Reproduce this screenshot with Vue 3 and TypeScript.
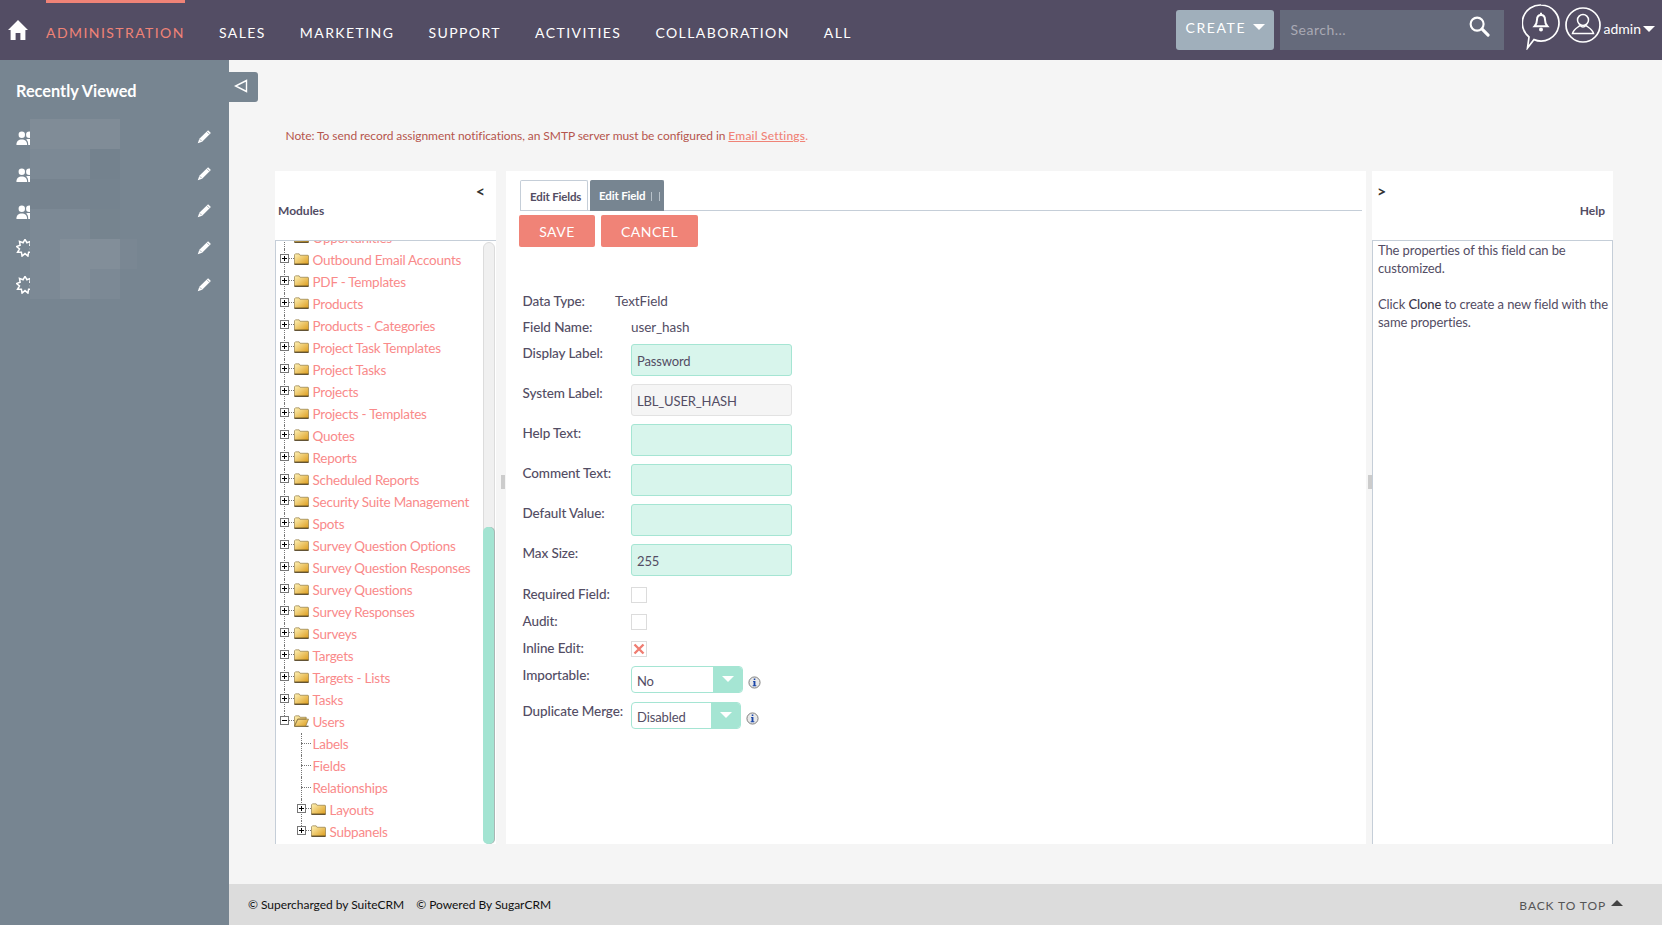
<script setup lang="ts">
type Row = { label: string; kind: 'plus' | 'minus' | 'leaf'; depth: number; last?: boolean }
const nav: string[] = ['SALES', 'MARKETING', 'SUPPORT', 'ACTIVITIES', 'COLLABORATION', 'ALL']
const recent: string[] = ['people', 'people', 'people', 'burst', 'burst']
const burst: string = Array.from({ length: 18 }, (_, i) => {
  const r = i % 2 === 0 ? 8.6 : 5.6
  const a = (i / 18) * Math.PI * 2 - Math.PI / 2
  return `${(9 + r * Math.cos(a)).toFixed(2)},${(9 + r * Math.sin(a)).toFixed(2)}`
}).join(' ')
const mosaic: { c: string[] }[] = [
  { c: ['#808c97', '#808c97', '#808c97', 'none'] },
  { c: ['#7c8995', '#7c8995', '#74828e', 'none'] },
  { c: ['#76838f', '#76838f', '#75838f', 'none'] },
  { c: ['#7c8995', '#7c8995', '#76848f', 'none'] },
  { c: ['#7c8995', '#828e99', '#828e99', '#7a8793'] },
  { c: ['#7c8995', '#828e99', '#7c8995', 'none'] }
]
const names: string[] = ['Opportunities', 'Outbound Email Accounts', 'PDF - Templates', 'Products', 'Products - Categories', 'Project Task Templates', 'Project Tasks', 'Projects', 'Projects - Templates', 'Quotes', 'Reports', 'Scheduled Reports', 'Security Suite Management', 'Spots', 'Survey Question Options', 'Survey Question Responses', 'Survey Questions', 'Survey Responses', 'Surveys', 'Targets', 'Targets - Lists', 'Tasks']
const rows: Row[] = [
  ...names.map((label): Row => ({ label, kind: 'plus', depth: 0 })),
  { label: 'Users', kind: 'minus', depth: 0, last: true },
  { label: 'Labels', kind: 'leaf', depth: 1 },
  { label: 'Fields', kind: 'leaf', depth: 1 },
  { label: 'Relationships', kind: 'leaf', depth: 1 },
  { label: 'Layouts', kind: 'plus', depth: 1 },
  { label: 'Subpanels', kind: 'plus', depth: 1, last: true }
]
const inputs: { label: string; value: string; locked?: boolean }[] = [
  { label: 'Display Label:', value: 'Password' },
  { label: 'System Label:', value: 'LBL_USER_HASH', locked: true },
  { label: 'Help Text:', value: '' },
  { label: 'Comment Text:', value: '' },
  { label: 'Default Value:', value: '' },
  { label: 'Max Size:', value: '255' }
]
const checks: { label: string; on: boolean }[] = [
  { label: 'Required Field:', on: false },
  { label: 'Audit:', on: false },
  { label: 'Inline Edit:', on: true }
]
</script>

<template>
  <div class="page">
    <header class="top">
      <svg class="home" viewBox="0 0 20 20"><path d="M10 0 20 10h-2.600v10h-5v-7H7.600v7h-5V10H0z" fill="#fff" /></svg>
      <nav class="nav">
        <a class="nav-item active">ADMINISTRATION</a>
        <a v-for="n in nav" :key="n" class="nav-item">{{ n }}</a>
      </nav>
      <div class="create">CREATE<i class="caret"></i></div>
      <div class="search">
        <span>Search...</span>
        <svg viewBox="0 0 22 22" class="lens"><circle cx="8.500" cy="8.500" r="6.800" fill="none" stroke="#fff" stroke-width="2.200" /><path d="M13.800 13.800 20 20" stroke="#fff" stroke-width="3.200" stroke-linecap="round" /></svg>
      </div>
      <svg class="bell" viewBox="0 0 38 46">
        <path d="M19 1a18 18 0 1 1-7 34.600L5.500 44l1.500-11A18 18 0 0 1 19 1z" fill="none" stroke="#fff" stroke-width="1.700" />
        <path d="M19 11c-2.800 0-4 2.200-4 4.800 0 3-.8 4.600-2.400 6.400h12.800c-1.600-1.800-2.400-3.400-2.400-6.400 0-2.600-1.200-4.800-4-4.800z" fill="none" stroke="#fff" stroke-width="2" /><circle cx="19" cy="25.500" r="2" fill="#fff" /><path d="M19 8.800v2" stroke="#fff" stroke-width="2" />
      </svg>
      <svg class="user" viewBox="0 0 36 36">
        <circle cx="18" cy="18" r="17" fill="none" stroke="#fff" stroke-width="1.700" />
        <circle cx="18" cy="13" r="5.500" fill="none" stroke="#fff" stroke-width="1.500" />
        <path d="M7.500 26.500c.8-4 5.200-6 7.500-8 2 2 4 2 6 0 2.300 2 6.700 4 7.500 8z" fill="none" stroke="#fff" stroke-width="1.500" />
      </svg>
      <span class="admin">admin</span><i class="caret admin-caret"></i>
    </header>

    <div class="body">
      <aside class="side">
        <h2 class="side-title">Recently Viewed</h2>
        <ul class="recent">
          <li v-for="(r, i) in recent" :key="i">
            <svg v-if="r === 'people'" class="r-icon p-icon" viewBox="0 0 16 14"><circle cx="5" cy="3.500" r="3" fill="#fff" /><circle cx="12" cy="3.500" r="3" fill="#fff" /><path d="M0 13c0-3.500 2-5 5-5s5 1.500 5 5zM11 13c0-2.500-.5-4-2-5 1-.5 2-.5 3-.5 3 0 4 2 4 5.500z" fill="#fff" /></svg>
            <svg v-else class="r-icon b-icon" viewBox="0 0 18 18"><polygon :points="burst" fill="none" stroke="#fff" stroke-width="1.500" /></svg>
            <svg class="pencil" viewBox="0 0 16 16"><path d="M.8 15.200 2.500 10.500 11.800 1.200 14.800 4.200 5.500 13.500z" fill="#fff" /><path d="m10.500 2.800 2.700 2.700M3 11l2 2" stroke="#778591" stroke-width=".7" fill="none" /></svg>
          </li>
        </ul>
        <div class="mosaic">
          <div v-for="(m, i) in mosaic" :key="i" class="m-row">
            <span v-for="(c, j) in m.c" :key="j" :class="['m-cell', { 'm-end': j === 3 }]" :style="{ background: c }"></span>
          </div>
        </div>
        <div class="toggle"><svg viewBox="0 0 14 14"><path d="M12.500 1.500v11L1.500 7z" fill="none" stroke="#fff" stroke-width="1.400" /></svg></div>
      </aside>

      <main class="main">
        <div class="content">
          <p class="note">Note: To send record assignment notifications, an SMTP server must be configured in <a>Email Settings</a><span class="dot">.</span></p>
          <div class="panels">
            <section class="panel left">
              <div class="p-head">
                <span class="chev chev-l">&lt;</span>
                <span class="p-title">Modules</span>
              </div>
              <div class="tree">
                <ul class="tree-list">
                  <li v-for="r in rows" :key="r.label" :class="['t-row', 'd' + r.depth, { last: r.last }]">
                    <template v-if="r.kind !== 'leaf'">
                      <span class="box"><i class="h"></i><i v-if="r.kind === 'plus'" class="v"></i></span>
                      <span class="dots"></span>
                      <svg class="folder" viewBox="0 0 16 12">
                        <defs><linearGradient id="fg" x1="0" y1="0" x2="1" y2="1"><stop offset="0" stop-color="#fff3b8" /><stop offset="1" stop-color="#dc9c1c" /></linearGradient></defs>
                        <path v-if="r.kind === 'plus'" d="M.5 11.500V1.500L1.500.5h4l1 1.500h8.500l.5.500v9z" fill="url(#fg)" stroke="#8a7440" stroke-width=".7" />
                        <path d="M.5 11.600H15.500" stroke="#3a2c10" stroke-width="1" />
                        <path v-if="r.kind === 'minus'" d="M.5 11.500V1.500L1.500.5h4l1 1.500h6.500v2H4L.5 11.500zm0 0L4 4h11.500l-3 7.500z" fill="url(#fg)" stroke="#8a7440" stroke-width=".7" />
                      </svg>
                    </template>
                    <span v-else class="tick"></span>
                    <a class="t-label">{{ r.label }}</a>
                  </li>
                </ul>
                <div class="track"></div>
                <div class="thumb"></div>
              </div>
            </section>
            <div class="split s-a"><i></i></div>
            <section class="panel center">
              <div class="tabs">
                <span class="tab">Edit Fields</span>
                <span class="tab on">Edit Field<em></em><em class="e2"></em></span>
              </div>
              <div class="actions">
                <button class="btn save">SAVE</button>
                <button class="btn cancel">CANCEL</button>
              </div>
              <form class="form">
                <div class="f-text t1"><label class="short">Data Type:</label><span>TextField</span></div>
                <div class="f-text t2"><label>Field Name:</label><span>user_hash</span></div>
                <div v-for="f in inputs" :key="f.label" class="f-input">
                  <label>{{ f.label }}</label>
                  <input :class="{ locked: f.locked }" :value="f.value" readonly />
                </div>
                <div v-for="c in checks" :key="c.label" class="f-check">
                  <label>{{ c.label }}</label>
                  <span class="check"><svg v-if="c.on" viewBox="0 0 12 12"><path d="m1.500 1.500 9 9m0-9-9 9" stroke="#ef7d72" stroke-width="2.400" /></svg></span>
                </div>
                <div class="f-select s1">
                  <label>Importable:</label>
                  <div class="select w1"><span>No</span><b><i></i></b></div>
                  <svg class="info" viewBox="0 0 14 14"><circle cx="7" cy="7" r="6" fill="#e8e8e8" stroke="#777" /><path d="M5.500 5.500H8V10h1v1H5v-1h1V6.500h-.5zM6.200 2.800h1.700v1.600H6.200z" fill="#1b46a8" /></svg>
                </div>
                <div class="f-select s2">
                  <label>Duplicate Merge:</label>
                  <div class="select w2"><span>Disabled</span><b><i></i></b></div>
                  <svg class="info" viewBox="0 0 14 14"><circle cx="7" cy="7" r="6" fill="#e8e8e8" stroke="#777" /><path d="M5.500 5.500H8V10h1v1H5v-1h1V6.500h-.5zM6.200 2.800h1.700v1.600H6.200z" fill="#1b46a8" /></svg>
                </div>
              </form>
            </section>
            <div class="split s-b"><i></i></div>
            <section class="panel right">
              <div class="p-head">
                <span class="chev chev-r">&gt;</span>
                <span class="p-title p-help">Help</span>
              </div>
              <div class="help">
                <p>The properties of this field can be customized.</p>
                <p>Click <b>Clone</b> to create a new field with the same properties.</p>
              </div>
            </section>
          </div>
        </div>
        <footer class="foot">
          <span>© Supercharged by SuiteCRM</span>
          <span class="f2">© Powered By SugarCRM</span>
          <span class="btt">BACK TO TOP<i></i></span>
        </footer>
      </main>
    </div>
  </div>
</template>

<style>
html, body { margin: 0; background: #f5f5f5; overflow: hidden; }
</style>

<style scoped>
* { box-sizing: border-box; }
.page { width: 1662px; height: 925px; display: flex; flex-direction: column; font-family: Lato, "Open Sans", sans-serif; color: #534d64; }
.top { height: 60px; background: #534d64; display: flex; align-items: center; padding: 0 7px 0 8px; flex: none; }
.home { width: 20px; height: 20px; margin-top: -1px; }
.nav { display: flex; gap: 34px; margin-left: 18px; height: 60px; flex: 1; }
.nav-item { color: #fff; font-size: 14px; letter-spacing: 1.430px; line-height: 60px; margin-top: 3px; }
.nav-item.active { color: #f08377; position: relative; }
.nav-item.active::before { content: ""; position: absolute; left: 0; right: 0; top: -3px; height: 3px; background: #f08377; }
.create { width: 98px; height: 40px; background: #a0afbb; border-radius: 3px; color: #fff; font-size: 14px; letter-spacing: 1.600px; display: flex; align-items: center; padding: 0 0 5px 10px; }
.caret { display: inline-block; border: 6px solid transparent; border-top-color: #fff; border-bottom-width: 0; }
.create .caret { margin: -2px 0 0 7px; }
.search { width: 224px; height: 40px; margin: 0 0 0 6px; background: #656a7b; color: #a9a9b4; font-size: 14px; padding: 0 10px 1px 11px; display: flex; align-items: center; justify-content: space-between; letter-spacing: .5px; }
.lens { width: 21px; height: 21px; margin: 6px 4px 0 0; align-self: flex-start; }
.bell { width: 38px; height: 46px; margin: -6px 0 0 18px; }
.user { width: 36px; height: 36px; margin: -11px 0 0 5px; }
.admin { color: #fff; font-size: 14px; margin: -3px 0 0 3px; }
.admin-caret { border-width: 6px 6.500px 0; margin: -3px 0 0 2px; }

.body { flex: 1; display: flex; min-height: 0; }
.side { width: 229px; flex: none; background: #778591; position: relative; }
.side-title { margin: 21px 0 0 16px; font-size: 16.300px; line-height: 20px; font-weight: 700; color: #fff; }
.recent { list-style: none; margin: 17px 0 0; padding: 0; }
.recent li { height: 37px; display: flex; align-items: center; justify-content: space-between; padding: 0 17px 0 16px; }
.r-icon { width: 18px; height: 15px; }
.p-icon { margin-top: 3px; }
.b-icon { height: 18px; }
.pencil { width: 15px; height: 15px; }
.mosaic { position: absolute; left: 30px; top: 59px; }
.m-row { display: flex; height: 30px; }
.m-cell { width: 30px; }
.m-cell.m-end { width: 17px; }
.toggle { position: absolute; left: 229px; top: 12px; width: 29px; height: 30px; background: #778591; border-radius: 0 3px 3px 0; display: flex; align-items: center; padding-left: 5px; }
.toggle svg { width: 14px; height: 14px; margin-top: -3px; }

.main { flex: 1; display: flex; flex-direction: column; min-width: 0; }
.content { flex: 1; padding: 0 49px 0 46px; min-height: 0; }
.note { margin: 69px 0 0 10.500px; height: 14px; font-size: 12px; line-height: 14px; color: #b5564d; white-space: nowrap; letter-spacing: -.07px; }
.note a { color: #f08377; text-decoration: underline; letter-spacing: .2px; font-weight: 500; }
.dot { color: #f08377; }
.panels { margin-top: 28px; height: 673px; display: flex; }
.panel { background: #fff; }
.left { width: 221px; }
.center { width: 860px; padding: 0 4px 0 14px; }
.right { flex: 1; }
.split { display: flex; align-items: center; padding-bottom: 52px; }
.s-a { width: 10px; padding-left: 5px; }
.s-b { width: 6px; padding-left: 2px; }
.split i { width: 4px; height: 14px; background: #ccc; }
.p-head { height: 69px; position: relative; font-size: 12px; }
.chev { position: absolute; top: 11px; font-weight: 700; font-size: 16px; color: #333; line-height: 18px; }
.chev-l { right: 11px; }
.chev-r { left: 5px; }
.p-title { position: absolute; top: 32px; line-height: 16px; font-weight: 700; }
.left .p-title { left: 3px; }
.p-help { right: 8px; }

.tree { height: 604px; border-top: 1px solid #c5ced8; border-left: 1px solid #c5ced8; position: relative; overflow: hidden; }
.tree-list { list-style: none; margin: -14px 0 0; padding: 0; }
.t-row { height: 22px; display: flex; align-items: center; padding-left: 3.500px; position: relative; font-size: 13.500px; letter-spacing: -.24px; }
.t-row.d0::before { content: ""; position: absolute; left: 7.500px; top: 0; bottom: 0; border-left: 1px dotted #777; }
.t-row.d0.last::before { bottom: 11px; }
.d1 { padding-left: 20.500px; }
.d1::before { content: ""; position: absolute; left: 24.500px; top: 0; bottom: 0; border-left: 1px dotted #777; }
.d1.last::before { bottom: 11px; }
.box { width: 9px; height: 9px; border: 1px solid #777; background: #fff; position: relative; margin-top: -4px; z-index: 1; flex: none; }
.box .h { position: absolute; left: 1px; right: 1px; top: 3px; height: 1px; background: #000; }
.box .v { position: absolute; top: 1px; bottom: 1px; left: 3px; width: 1px; background: #000; }
.dots { width: 5px; height: 0; border-top: 1px dotted #777; margin-top: -4px; flex: none; }
.folder { width: 15px; height: 12px; margin: -3px 4px 0 0; flex: none; }
.tick { width: 10px; height: 0; border-top: 1px dotted #777; margin: -2px 2px 0 4px; flex: none; }
.t-label { color: #f98a8a; white-space: nowrap; margin-top: -1px; }
.track { position: absolute; right: 1px; top: 1px; bottom: 0; width: 12px; background: #f0f0f0; border: 1px solid #dcdcdc; border-radius: 6px; }
.thumb { position: absolute; right: 2px; top: 286px; bottom: 0; width: 11px; background: #a3e4d2; border-radius: 5px; box-shadow: 1px 0 0 #a9b6b4; }

.tabs { height: 40px; padding-top: 9px; border-bottom: 1px solid #c5ced8; display: flex; gap: 2px; font-size: 11.500px; letter-spacing: -.15px; font-weight: 700; }
.tab { height: 31px; line-height: 32px; padding: 0 9px; border: 1px solid #c5ced8; border-bottom: 0; border-radius: 2px 2px 0 0; width: 68px; white-space: nowrap; }
.tab.on { background: #778591; color: #fff; width: 74px; padding-left: 8px; border-color: #778591; display: flex; align-items: center; }
.tab em { width: 1px; height: 9px; background: #b8c2ca; margin: 1px 0 0 6px; flex: none; }
.tab em.e2 { margin-left: 7px; }
.actions { display: flex; gap: 6px; margin: 4px 0 0 -1px; }
.btn { height: 32px; border: 0; border-radius: 2px; background: #f08377; color: #fff; font: 14px Lato, sans-serif; letter-spacing: .5px; padding: 0; }
.save { width: 76px; }
.cancel { width: 97px; }
.form { padding: 0 0 0 2.500px; font-size: 13.500px; letter-spacing: -.1px; }
label { font-weight: 500; width: 108.500px; flex: none; white-space: nowrap; }
.f-text { display: flex; align-items: center; height: 22px; }
.t1 { margin-top: 43px; }
.t2 { margin-top: 4px; }
label.short { width: 92.500px; }
.f-input { display: flex; height: 32px; margin-top: 8px; }
.t2 + .f-input { margin-top: 6px; }
.f-input label { line-height: 18px; }
input { width: 161px; height: 32px; border: 1px solid #a5e5d3; background: #d8f5ec; border-radius: 3px; font: 13px Lato, sans-serif; letter-spacing: -.15px; color: #534d64; padding: 2px 5px 0; outline: none; }
input.locked { background: #f5f5f5; border-color: #e2e2e2; }
.f-check { display: flex; align-items: center; height: 16px; margin-top: 11px; }
.f-check label { margin-top: -2px; }
.check { width: 16px; height: 16px; border: 1px solid #dcdcdc; display: flex; align-items: center; justify-content: center; background: #fff; }
.check svg { width: 12px; height: 12px; }
.f-select { display: flex; align-items: flex-start; }
.s1 { margin-top: 9px; height: 27px; }
.s2 { margin-top: 9px; height: 27px; }
.f-select label { line-height: 18px; }
.select { height: 27px; border: 1px solid #a5e5d3; border-radius: 4px; background: #fff; display: flex; justify-content: space-between; align-items: center; padding-left: 5px; font-size: 13px; }
.select span { padding-top: 2px; }
.w1 { width: 112px; }
.w2 { width: 110px; }
.select b { width: 29px; align-self: stretch; background: #a5e5d3; border-radius: 0 3px 3px 0; display: flex; align-items: center; justify-content: center; font-weight: 400; }
.select b i { border: 6px solid transparent; border-top-color: #fff; border-bottom-width: 0; margin-top: -1px; }
.info { width: 13px; height: 13px; margin: 10px 0 0 5px; }

.help { height: 604px; border: 1px solid #c5ced8; border-bottom: 0; padding: 0 0 0 5px; font-size: 13px; letter-spacing: -.1px; line-height: 18px; }
.help p { margin: 0 0 18px; }
.help b { font-weight: 500; color: #3b3749; }

.foot { height: 41px; flex: none; background: #dcdcdc; display: flex; align-items: center; padding: 0 39px 0 19px; font-size: 12px; color: #111; letter-spacing: -.03px; }
.f2 { margin-left: 12px; }
.btt { margin-left: auto; letter-spacing: .9px; color: #555; display: flex; align-items: center; font-size: 12px; padding-top: 2px; }
.btt i { border: 6px solid transparent; border-bottom-color: #444; border-top-width: 0; margin: -6px 0 0 5px; }
</style>
